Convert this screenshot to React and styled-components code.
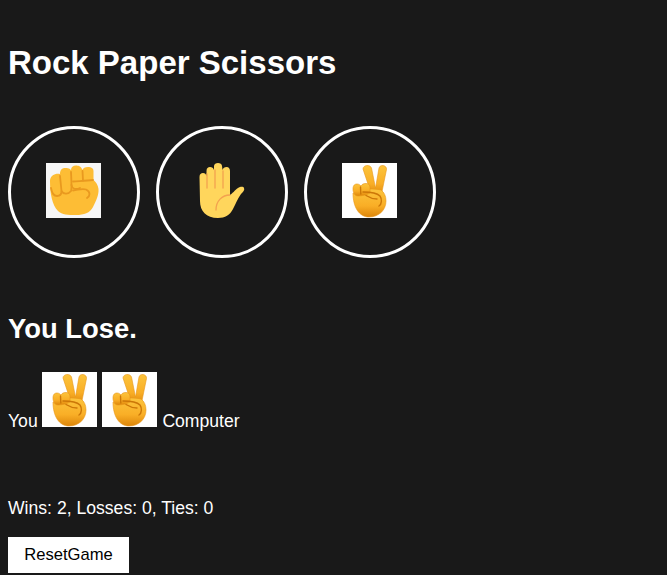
import React, { useId, useState } from "react";
import styled, { createGlobalStyle } from "styled-components";

const GlobalStyle = createGlobalStyle`
  html, body {
    margin: 0;
    background: #191919;
    color: #ffffff;
    font-family: "Liberation Sans", Arial, sans-serif;
    font-size: 17.6px;
  }
`;

const FistIcon = () => (
  <svg viewBox="0 0 55 55" width="55" height="55">
    <path
      d="M4 18 C4 30 6 42 12 48 C16 52 22 52 30 52 C38 52 44 50 47 44 C50 38 53 32 52.5 26 C52 22 50 19 47.5 17 L47.5 8 C47.5 5 45 4 42 4 C39 4 37 5 36.5 7 C35 3 32 2.5 30 2.5 C27 2.5 25 4 25 7 C23 5 21 5 19 5 C16 5 14 7 14 11 C10 10 4 12 4 18 Z"
      fill="#fdbd35"
    />
    <g fill="none" stroke="#e9991f" strokeWidth="1.8" strokeLinecap="round">
      <path d="M5 25 C6 31 9 33 11 33 C14 33 15.5 31 15.5 28 L14 13" />
      <path d="M15.5 28 C17 31 22 32 25 28 C26 26 25.5 20 25 9" />
      <path d="M25.5 22 C26 26 30 27 34 25" />
      <path d="M36.5 8 L37 17.5" />
      <path d="M27 18.5 C33 18 40 18 47 17" />
      <path d="M27 27.5 C32 27 36 25 40 26.5 C45 29 44 33 41 35" />
    </g>
  </svg>
);

const HandIcon = () => (
  <svg viewBox="0 0 55 55" width="55" height="55">
    <path
      d="M5.5 14 C5.5 11 7 10 9 10 C11 10 12 11 12.5 13 L12.5 8 C12.5 5 14 4 16 4 C18 4 19.5 5 20 7 L20 3 C20 1 22 0 24 0 C26 0 28 1 28 3 L28.5 7 C29 5 30.5 4 32.5 4 C35 4 36 6 36 8 L36 32 C38 31 41 27 44 25 C46 24 49 23 50 25 C51 27 49 29 47 31 C44 35 42 40 39 46 C36 52 31 55 24 55 C12 55 6 48 6 38 Z"
      fill="#ffd65c"
    />
    <g fill="none" stroke="#f3a14f" strokeWidth="1.3" strokeLinecap="round">
      <path d="M13 11 L13 25" />
      <path d="M21 7 L21 25" />
      <path d="M29 8 L29 25" />
      <path d="M22 47 C22 38 28 32 36 32" />
    </g>
  </svg>
);

const PeaceIcon = () => {
  const id = useId();
  return (
    <svg viewBox="0 0 55 55" width="55" height="55">
      <defs>
        <linearGradient id={id} x1="0" y1="0" x2="0" y2="1">
          <stop offset="0" stopColor="#fcc43c" />
          <stop offset="0.6" stopColor="#f9ae26" />
          <stop offset="1" stopColor="#dd8509" />
        </linearGradient>
      </defs>
      <g stroke="#e8961a" strokeWidth="0.6" fill={`url(#${id})`}>
        <path d="M21 6 C21 2 28 1 29.5 5 L33.5 25 L37 5 C38 1 45 2 44.5 6.5 L39.5 31 L30 33 Z" />
        <path d="M11 30 C11 44 17 54 27 54 C37 54 44 47 44 38 C44 33 42 29 39 27 C35 26 31 26 27 26 L21 31 L14 32 Z" />
        <path d="M11 26 C11 22 13 21 15 21 C17 21 18 22 19 23 C20 21 22 20.5 24 20.5 C27 20.5 28 22 28 25 L28 30 C25 32 20 33 16 33 C13 33 11 30 11 26 Z" />
      </g>
      <g fill="none" stroke="#cc7708" strokeWidth="1.4" strokeLinecap="round">
        <path d="M18.5 24 L18.8 31" />
        <path d="M21 29 C27 29 34 29 38 33 C40 36 40 41 37 43" />
        <path d="M24 32.5 C28 35 32 36 35 36" />
      </g>
    </svg>
  );
};

const choices = [
  { name: "rock", Icon: FistIcon, tint: "#f6f6f6" },
  { name: "paper", Icon: HandIcon, tint: "transparent" },
  { name: "scissors", Icon: PeaceIcon, tint: "#ffffff" },
];

const App = () => {
  const [score] = useState({ wins: 2, losses: 0, ties: 0 });

  return (
    <Page>
      <GlobalStyle />
      <Title>Rock Paper Scissors</Title>
      <Choices>
        {choices.map(({ name, Icon, tint }) => (
          <ChoiceButton key={name} aria-label={name}>
            <Picture $tint={tint}>
              <Icon />
            </Picture>
          </ChoiceButton>
        ))}
      </Choices>
      <Result>You Lose.</Result>
      <Round>
        You{" "}
        <Picture $tint="#ffffff">
          <PeaceIcon />
        </Picture>{" "}
        <Picture $tint="#ffffff">
          <PeaceIcon />
        </Picture>{" "}
        Computer
      </Round>
      <Score>
        Wins: {score.wins}, Losses: {score.losses}, Ties: {score.ties}
      </Score>
      <ResetButton>ResetGame</ResetButton>
    </Page>
  );
};

const Page = styled.main`
  padding: 44px 8px 2px;
  height: 575px;
  box-sizing: border-box;
  overflow: hidden;
`;

const Title = styled.h1`
  margin: 0 0 45px;
  font-size: 33px;
  line-height: 37px;
  font-weight: 700;
`;

const Choices = styled.div`
  display: flex;
  gap: 16px;
`;

const ChoiceButton = styled.button`
  width: 132px;
  height: 132px;
  padding: 0 2px 4px 0;
  display: flex;
  align-items: center;
  justify-content: center;
  background: transparent;
  border: 3px solid #ffffff;
  border-radius: 50%;
  cursor: pointer;
`;

const Picture = styled.span`
  display: inline-block;
  width: 55px;
  height: 55px;
  background: ${({ $tint }) => $tint};

  svg {
    display: block;
  }
`;

const Result = styled.h2`
  margin: 57px 0 30px;
  font-size: 27.4px;
  line-height: 27px;
  font-weight: 700;
`;

const Round = styled.p`
  margin: 0;
  line-height: 18px;

  > span:first-of-type {
    margin: 0 1px 0 -1px;
  }
`;

const Score = styled.p`
  margin: 69px 0 20px;
  line-height: 18px;
`;

const ResetButton = styled.button`
  display: block;
  width: 121px;
  height: 36px;
  padding: 0;
  background: #ffffff;
  color: #000000;
  border: none;
  font-family: inherit;
  font-size: 16.6px;
  cursor: pointer;
`;

export default App;
